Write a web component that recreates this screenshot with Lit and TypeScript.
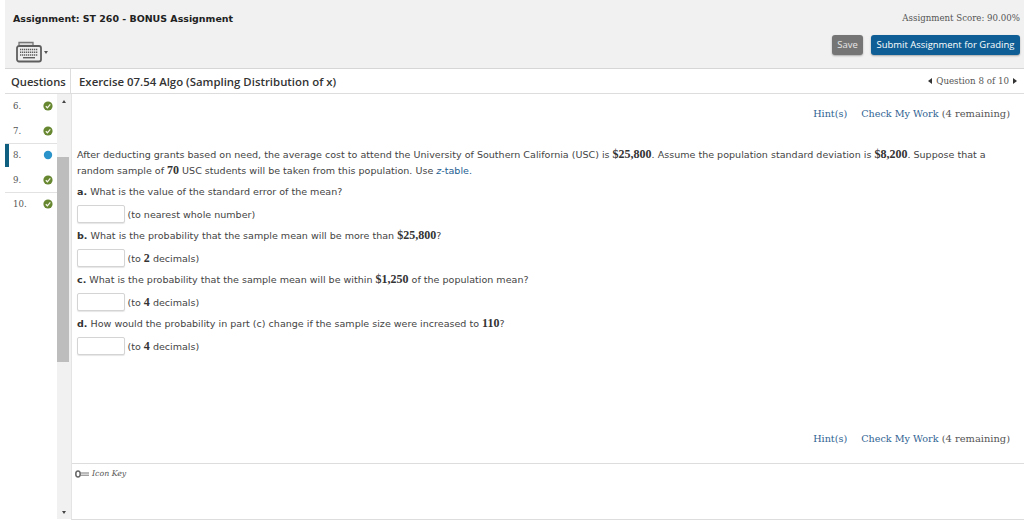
import { LitElement, html, css, svg } from "lit";
import { customElement } from "lit/decorators.js";

const check = svg`<svg class="st" viewBox="0 0 10 10" width="10" height="10"><circle cx="5" cy="5" r="4.6" fill="#66862f"/><path d="M2.8 5.2 4.4 6.8 7.3 3.4" fill="none" stroke="#f4f4e8" stroke-width="1.3"/></svg>`;
const dot = svg`<svg class="st" viewBox="0 0 10 10" width="10" height="10"><circle cx="5" cy="5" r="4.2" fill="#2a93c9"/></svg>`;

@customElement("app-root")
export class AppRoot extends LitElement {
  static styles = css`
    :host { display: block; width: 1024px; height: 523px; overflow: hidden; background: #fff; color: #444; font-family: "DejaVu Sans", Verdana, sans-serif; font-size: 9.55px; }
    * { box-sizing: border-box; }
    b { color: #333; }
    .page { margin-left: 5px; height: 523px; display: flex; flex-direction: column; }
    .head { height: 69px; flex: none; background: #f1f1f1; border-bottom: 1px solid #d6d6d6; padding: 11px 4px 0 8px; display: grid; grid-template-columns: 1fr auto; grid-template-rows: 24px auto; }
    .title { font-weight: 700; font-size: 9.45px; color: #222; line-height: 14px; padding-top: 1px; }
    .score { font-family: "DejaVu Serif", serif; font-size: 8.65px; color: #555; line-height: 14px; text-align: right; }
    .tools { display: flex; align-items: center; gap: 1px; padding: 0 0 0 3px; }
    .caret { width: 0; height: 0; border: 2px solid transparent; border-top: 3px solid #555; border-bottom: 0; margin-top: 1px; }
    .btns { display: flex; gap: 8px; }
    .btn { height: 20px; border-radius: 3px; color: #fff; font-family: "Open Sans", sans-serif; font-size: 9.45px; line-height: 20px; text-align: center; box-shadow: 0 1px 2px rgba(0,0,0,.3); }
    .save { background: #757575; color: #e8e8e8; width: 31px; }
    .submit { background: #0f5f96; width: 149px; }
    .bar { height: 25px; flex: none; display: flex; align-items: center; border-bottom: 1px solid #ddd; font-family: "Open Sans", sans-serif; font-weight: 600; font-size: 11.2px; color: #333; }
    .qlabel { width: 66px; padding-left: 6px; align-self: stretch; display: flex; align-items: center; border-right: 1px solid #ddd; }
    .ex { flex: 1; padding-left: 8px; font-size: 11.4px; }
    .nav { font-family: "DejaVu Serif", serif; font-weight: 400; font-size: 8.7px; color: #555; padding-right: 7px; display: flex; align-items: center; gap: 4px; }
    .tri { width: 0; height: 0; border: 3px solid transparent; }
    .tri.l { border-right: 4px solid #333; border-left: 0; }
    .tri.r { border-left: 4px solid #333; border-right: 0; }
    .body { flex: 1; display: flex; min-height: 0; }
    .side { width: 52px; flex: none; display: flex; flex-direction: column; padding-top: 0.5px; }
    .row { height: 24.5px; position: relative; display: flex; align-items: center; justify-content: space-between; padding: 0 4px 0 8px; font-family: "DejaVu Serif", serif; font-size: 8.6px; color: #555; border-bottom: 1px solid transparent; }
    .row.line { border-bottom-color: #e2e2e2; }
    .row.cur::before { content: ""; position: absolute; left: 0; top: 0; bottom: 0; width: 4px; background: #0f5f80; }
    .st { display: block; }
    .scroll { width: 14px; flex: none; height: 425px; background: #f1f1f1; position: relative; display: flex; flex-direction: column; justify-content: space-between; align-items: center; padding: 6px 0 5px; }
    .thumb { position: absolute; left: 0; right: 2px; top: 63px; height: 205px; background: #bdbdbd; }
    .up { width: 0; height: 0; border: 2.5px solid transparent; border-bottom: 3px solid #444; border-top: 0; }
    .down { width: 0; height: 0; border: 2.5px solid transparent; border-top: 3px solid #444; border-bottom: 0; }
    .main { flex: 1; display: flex; flex-direction: column; border-left: 1px solid #e4e4e4; height: 426px; border-bottom: 1px solid #ddd; min-width: 0; }
    .hints { display: flex; justify-content: flex-end; gap: 14px; font-family: "DejaVu Serif", serif; font-size: 9.9px; color: #555; padding-right: 14px; line-height: 14px; }
    .hints a { color: #2f6392; font-size: 9.65px; }
    .top { padding-top: 13px; }
    .content { padding: 26px 30px 0 5px; flex: 1; }
    .p { line-height: 16px; margin: 0 0 5px; }
    .p a { color: #1e6091; }
    .m { font-family: "Liberation Serif", serif; font-weight: 700; font-size: 12px; color: #333; line-height: 0; }
    .q { line-height: 16px; }
    .ans { display: flex; align-items: center; gap: 3px; height: 18px; margin: 5px 0; }
    .ans i { font-style: normal; }
    .box { width: 48px; height: 18px; margin-left: -0.5px; background: #fff; border: 1px solid #d4d4d4; border-radius: 2px; box-shadow: 0 1px 1px rgba(0,0,0,.1); }
    .bottom { padding-bottom: 17px; }
    .key { height: 56px; flex: none; border-top: 1px solid #ddd; padding: 3px 0 0 3px; display: flex; align-items: flex-start; gap: 2px; font-family: "DejaVu Serif", serif; font-style: italic; font-size: 7.8px; color: #555; line-height: 14px; }
    .key svg { margin-top: 3px; }
  `;

  private qa(label: string, text: unknown, hint: unknown) {
    return html`<div class="q"><b>${label}</b> ${text}</div><div class="ans"><span class="box"></span><i>${hint}</i></div>`;
  }

  render() {
    const rows = [
      ["6.", check, ""], ["7.", check, "line"], ["8.", dot, "cur"], ["9.", check, "line"], ["10.", check, ""],
    ] as const;
    return html`<div class="page">
      <div class="head">
        <div class="title">Assignment: ST 260 - BONUS Assignment</div>
        <div class="score">Assignment Score: 90.00%</div>
        <div class="tools">
          <svg width="27" height="22" viewBox="0 0 27 22"><path d="M3 4V1.5h14V4" fill="#ddd" stroke="#777" stroke-width="1.3"/><rect x="1" y="5" width="24" height="15.5" rx="2" fill="#eee" stroke="#5e5e5e" stroke-width="1.8"/><g fill="none" stroke="#5e5e5e" stroke-width="1.5" stroke-dasharray="1.3 .7"><path d="M4 8.5h18M4 11.2h18M4 13.9h18"/></g><path d="M7 16.7h12" stroke="#5e5e5e" stroke-width="1.4"/></svg>
          <span class="caret"></span>
        </div>
        <div class="btns"><span class="btn save">Save</span><span class="btn submit">Submit Assignment for Grading</span></div>
      </div>
      <div class="bar">
        <div class="qlabel">Questions</div>
        <div class="ex">Exercise 07.54 Algo (Sampling Distribution of x)</div>
        <div class="nav"><span class="tri l"></span>Question 8 of 10<span class="tri r"></span></div>
      </div>
      <div class="body">
        <div class="side">
          ${rows.map(([n, ic, c]) => html`<div class="row ${c}"><span>${n}</span>${ic}</div>`)}
        </div>
        <div class="scroll"><span class="thumb"></span><span class="up"></span><span class="down"></span></div>
        <div class="main">
          <div class="hints top"><a>Hint(s)</a><span><a>Check My Work</a> (4 remaining)</span></div>
          <div class="content">
            <p class="p">After deducting grants based on need, the average cost to attend the University of Southern California (USC) is <span class="m">$25,800</span>. Assume the population standard deviation is <span class="m">$8,200</span>. Suppose that a random sample of <span class="m">70</span> USC students will be taken from this population. Use <a><em>z</em>-table.</a></p>
            ${this.qa("a.", "What is the value of the standard error of the mean?", "(to nearest whole number)")}
            ${this.qa("b.", html`What is the probability that the sample mean will be more than <span class="m">$25,800</span>?`, html`(to <span class="m">2</span> decimals)`)}
            ${this.qa("c.", html`What is the probability that the sample mean will be within <span class="m">$1,250</span> of the population mean?`, html`(to <span class="m">4</span> decimals)`)}
            ${this.qa("d.", html`How would the probability in part (c) change if the sample size were increased to <span class="m">110</span>?`, html`(to <span class="m">4</span> decimals)`)}
          </div>
          <div class="hints bottom"><a>Hint(s)</a><span><a>Check My Work</a> (4 remaining)</span></div>
          <div class="key">
            <svg width="15" height="8" viewBox="0 0 15 8"><ellipse cx="3" cy="4" rx="2.2" ry="3" fill="none" stroke="#666" stroke-width="1.5"/><path d="M5 3h9M5 5.2h9" stroke="#777" stroke-width="1"/></svg>
            Icon Key
          </div>
        </div>
      </div>
    </div>`;
  }
}
